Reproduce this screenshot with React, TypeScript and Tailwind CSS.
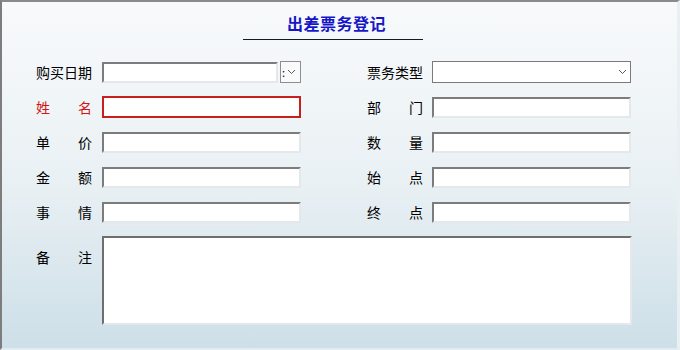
import React from 'react';

// two-char labels are spread across the full label width, like the original form
function Label({ text, red = false }: { text: string; red?: boolean }) {
  const chars = text.split('');
  return (
    <div
      className={`w-[56px] shrink-0 flex text-[14px] leading-[16px] ${chars.length === 2 ? 'justify-between' : 'justify-start'} ${red ? 'text-[#d41414]' : 'text-black'}`}
    >
      {chars.map((c, i) => (
        <span key={i}>{c}</span>
      ))}
    </div>
  );
}

function Chevron() {
  return (
    <svg width="9" height="6" viewBox="0 0 9 6" className="shrink-0">
      <polyline points="1,1 4.5,4.5 8,1" fill="none" stroke="#5a5a5a" strokeWidth="1" />
    </svg>
  );
}

function TextBox({ red = false, w = 'w-[199px]' }: { red?: boolean; w?: string }) {
  return red ? (
    <div className={`${w} h-[22px] bg-white border-2 border-[#c81e1e]`} />
  ) : (
    <div className={`${w} h-[21px] bg-white border-2 border-t-[#7c7c7c] border-l-[#7c7c7c] border-r-[#e4e8eb] border-b-[#e4e8eb]`} />
  );
}

function Row({ children }: { children: React.ReactNode }) {
  return <div className="flex items-center h-[22px]">{children}</div>;
}

export default function App() {
  return (
    <div
      className="w-[680px] h-[350px] overflow-hidden border-t-2 border-l-2 border-t-[#8a8a8a] border-l-[#7d7d7d] border-r-[3px] border-r-[#e9eff2] border-b-2 border-b-[#e2ecf0] bg-gradient-to-b from-[#f8fafb] via-[#eaf1f4] to-[#cddfe8]"
      style={{ fontFamily: '"Noto Sans CJK SC", "Noto Sans", sans-serif' }}
    >
      {/* title */}
      <div className="flex flex-col items-center pt-[11px] pr-[14px]">
        <div className="ml-[8px] text-[16px] leading-[20px] font-bold text-[#1616c8] tracking-[0.5px]">出差票务登记</div>
        <div className="w-[180px] h-px bg-[#1a1a1a] mt-[6px]" />
      </div>

      {/* form body */}
      <div className="flex flex-col gap-[13px] pl-[34px] mt-[21px]">
        <Row>
          <Label text="购买日期" />
          <div className="ml-[10px] w-[199px] flex items-center gap-[2px]">
            <TextBox w="w-[177px]" />
            <div className="w-[21px] h-[22px] border border-[#8e8e8e] bg-[#fafafa] flex items-center pl-[1px] gap-[2px]">
              <span className="text-[11px] leading-none text-black">:</span>
              <Chevron />
            </div>
          </div>
          <div className="ml-[66px]">
            <Label text="票务类型" />
          </div>
          <div className="ml-[9px] w-[199px] h-[22px] bg-white border border-[#7a7a7a] flex items-center justify-end pr-[3px]">
            <Chevron />
          </div>
        </Row>
        <Row>
          <Label text="姓名" red />
          <div className="ml-[10px]">
            <TextBox red />
          </div>
          <div className="ml-[66px]">
            <Label text="部门" />
          </div>
          <div className="ml-[9px]">
            <TextBox />
          </div>
        </Row>
        <Row>
          <Label text="单价" />
          <div className="ml-[10px]">
            <TextBox />
          </div>
          <div className="ml-[66px]">
            <Label text="数量" />
          </div>
          <div className="ml-[9px]">
            <TextBox />
          </div>
        </Row>
        <Row>
          <Label text="金额" />
          <div className="ml-[10px]">
            <TextBox />
          </div>
          <div className="ml-[66px]">
            <Label text="始点" />
          </div>
          <div className="ml-[9px]">
            <TextBox />
          </div>
        </Row>
        <Row>
          <Label text="事情" />
          <div className="ml-[10px]">
            <TextBox />
          </div>
          <div className="ml-[66px]">
            <Label text="终点" />
          </div>
          <div className="ml-[9px]">
            <TextBox />
          </div>
        </Row>
        <div className="flex items-start">
          <div className="mt-[13px]">
            <Label text="备注" />
          </div>
          <div className="ml-[10px] w-[530px] h-[89px] bg-white border-2 border-t-[#6e6e6e] border-l-[#6e6e6e] border-r-[#e4e8eb] border-b-[#e4e8eb]" />
        </div>
      </div>
    </div>
  );
}
